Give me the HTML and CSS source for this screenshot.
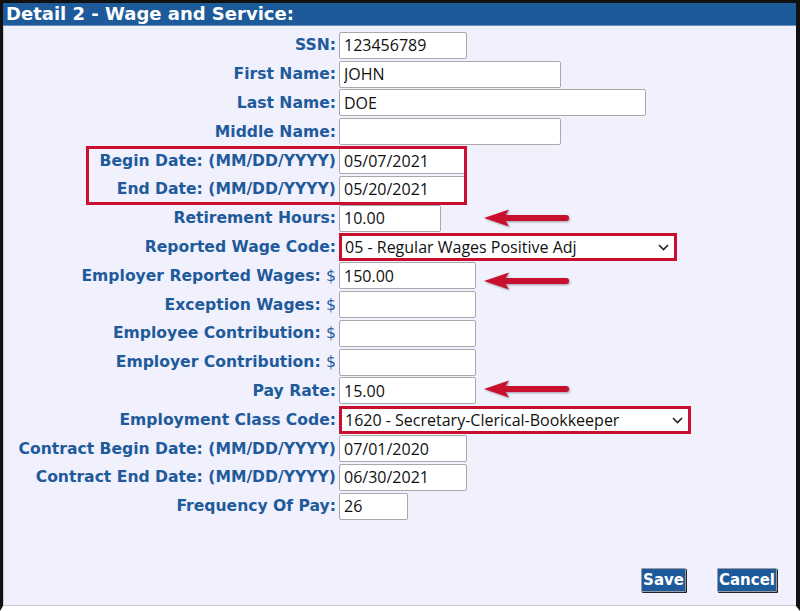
FILE: index.html
```html
<!DOCTYPE html>
<html>
<head>
<meta charset="utf-8">
<title>Detail 2 - Wage and Service</title>
<link rel="stylesheet" href="styles.css">
</head>
<body>
<div class="window">
  <div class="title">Detail 2 - Wage and Service:</div>
  <div class="form">
    <div class="row"><label class="label">SSN:</label><input class="field w128" value="123456789"></div>
    <div class="row"><label class="label">First Name:</label><input class="field w222" value="JOHN"></div>
    <div class="row"><label class="label">Last Name:</label><input class="field w307" value="DOE"></div>
    <div class="row"><label class="label">Middle Name:</label><input class="field w222" value=""></div>
    <div class="row"><label class="label">Begin Date: (MM/DD/YYYY)</label><input class="field w128" value="05/07/2021"></div>
    <div class="row"><label class="label">End Date: (MM/DD/YYYY)</label><input class="field w128" value="05/20/2021"></div>
    <div class="row"><label class="label">Retirement Hours:</label><input class="field w102" value="10.00"></div>
    <div class="row"><label class="label">Reported Wage Code:</label>
      <span class="selwrap w338"><select class="sel"><option>05 - Regular Wages Positive Adj</option></select>
        <svg class="chev" width="11" height="7" viewBox="0 0 11 7"><path d="M1 1 L5.5 5.5 L10 1" fill="none" stroke="#222" stroke-width="1.6"/></svg></span></div>
    <div class="row"><label class="label">Employer Reported Wages: <span class="cur">$</span></label><input class="field w137" value="150.00"></div>
    <div class="row"><label class="label">Exception Wages: <span class="cur">$</span></label><input class="field w137" value=""></div>
    <div class="row"><label class="label">Employee Contribution: <span class="cur">$</span></label><input class="field w137" value=""></div>
    <div class="row"><label class="label">Employer Contribution: <span class="cur">$</span></label><input class="field w137" value=""></div>
    <div class="row"><label class="label">Pay Rate:</label><input class="field w137" value="15.00"></div>
    <div class="row"><label class="label">Employment Class Code:</label>
      <span class="selwrap w352"><select class="sel"><option>1620 - Secretary-Clerical-Bookkeeper</option></select>
        <svg class="chev" width="11" height="7" viewBox="0 0 11 7"><path d="M1 1 L5.5 5.5 L10 1" fill="none" stroke="#222" stroke-width="1.6"/></svg></span></div>
    <div class="row"><label class="label">Contract Begin Date: (MM/DD/YYYY)</label><input class="field w128" value="07/01/2020"></div>
    <div class="row"><label class="label">Contract End Date: (MM/DD/YYYY)</label><input class="field w128" value="06/30/2021"></div>
    <div class="row"><label class="label">Frequency Of Pay:</label><input class="field w69" value="26"></div>

    <div class="mark-box"></div>
    <svg class="arrow a1" width="90" height="22" viewBox="0 0 90 22"><path d="M1 11 L26 2.5 L22 9 L22 13 L26 19.5 Z" fill="#c8102e"/><line x1="22" y1="11" x2="83" y2="11" stroke="#c8102e" stroke-width="6" stroke-linecap="round"/></svg>
    <svg class="arrow a2" width="90" height="22" viewBox="0 0 90 22"><path d="M1 11 L26 2.5 L22 9 L22 13 L26 19.5 Z" fill="#c8102e"/><line x1="22" y1="11" x2="83" y2="11" stroke="#c8102e" stroke-width="6" stroke-linecap="round"/></svg>
    <svg class="arrow a3" width="90" height="22" viewBox="0 0 90 22"><path d="M1 11 L26 2.5 L22 9 L22 13 L26 19.5 Z" fill="#c8102e"/><line x1="22" y1="11" x2="83" y2="11" stroke="#c8102e" stroke-width="6" stroke-linecap="round"/></svg>
  </div>
  <div class="actions">
    <button class="btn">Save</button>
    <button class="btn">Cancel</button>
  </div>
</div>
</body>
</html>
```
FILE: styles.css
```css
html, body {
  margin: 0;
  padding: 0;
  background: #ffffff;
}
.window {
  width: 800px;
  height: 611px;
  box-sizing: border-box;
  border-top: 3px solid #111;
  border-left: 3px solid #111;
  border-right: 4px solid #111;
  border-bottom: 5px solid #ffffff;
  background: #f1f0fd;
  box-shadow: inset 1px 0 0 #c9c9d2, inset 0 -1px 0 #c9c9d2;
  display: flex;
  flex-direction: column;
  font-family: "DejaVu Sans", Verdana, sans-serif;
}
.title {
  height: 22px;
  line-height: 22px;
  background: #1c5a9a;
  border-bottom: 1px solid #6f90c2;
  color: #ffffff;
  font-weight: bold;
  font-size: 18px;
  padding-left: 3px;
  white-space: nowrap;
}
.form {
  position: relative;
  padding-top: 5px;
  padding-left: 1px;
}
.row {
  display: flex;
  align-items: center;
  height: 28.8px;
}
.label {
  width: 332px;
  margin-right: 3px;
  text-align: right;
  color: #1f5b9b;
  font-weight: bold;
  font-size: 15.6px;
  white-space: nowrap;
}
.cur {
  font-weight: normal;
}
.field {
  box-sizing: border-box;
  height: 27px;
  border: 1px solid #a9a9a9;
  border-radius: 2px;
  background: #ffffff;
  padding: 0 4px;
  margin: 0;
  font-family: "Open Sans", "Noto Sans", sans-serif;
  font-size: 16px;
  color: #111;
  outline: none;
}
.w69 { width: 69px; }
.w102 { width: 102px; }
.w128 { width: 128px; }
.w137 { width: 137px; }
.w222 { width: 222px; }
.w307 { width: 307px; }
.w338 { width: 338px; }
.w352 { width: 352px; }
.selwrap {
  position: relative;
  display: inline-flex;
  height: 28px;
}
.sel {
  appearance: none;
  -webkit-appearance: none;
  box-sizing: border-box;
  width: 100%;
  height: 28px;
  border: 3px solid #c8102e;
  border-radius: 0;
  background: #ffffff;
  padding: 0 3px;
  margin: 0;
  font-family: "Open Sans", "Noto Sans", sans-serif;
  font-size: 16px;
  color: #111;
  outline: none;
}
.chev {
  position: absolute;
  right: 8px;
  top: 11px;
  pointer-events: none;
}
.mark-box {
  position: absolute;
  left: 83px;
  top: 120px;
  width: 381px;
  height: 59px;
  box-sizing: border-box;
  border: 3px solid #c8102e;
  pointer-events: none;
}
.arrow {
  position: absolute;
  left: 480px;
  filter: drop-shadow(1px 1px 1px rgba(0,0,0,0.35));
  pointer-events: none;
}
.a1 { top: 181px; }
.a2 { top: 244px; }
.a3 { top: 352px; }
.actions {
  margin-top: auto;
  display: flex;
  justify-content: flex-end;
  gap: 31px;
  padding: 0 19px 14px 0;
}
.btn {
  box-sizing: border-box;
  height: 24px;
  padding: 0 1px;
  margin: 0;
  background: #1c5a9a;
  color: #ffffff;
  font-family: "DejaVu Sans", Verdana, sans-serif;
  font-weight: bold;
  font-size: 15px;
  border: 1px solid #9a9aa2;
  box-shadow: 1px 1px 0 #222;
  border-radius: 1px;
  cursor: pointer;
}
```
